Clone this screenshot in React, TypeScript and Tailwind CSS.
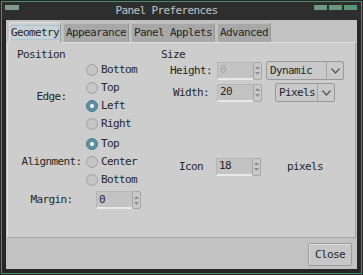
import React from 'react';

const txt = "font-['DejaVu_Sans_Mono','Liberation_Mono',monospace] text-[11px] tracking-[-0.62px] leading-[12px] text-[#262626]";

function Radio({ label, checked }: { label: string; checked?: boolean }) {
  return (
    <div className="h-[18px] flex items-center">
      {checked ? (
        <span className="w-[12px] h-[12px] rounded-full bg-[#5d90a7] border border-[#4a7b92] flex items-center justify-center">
          <span className="w-[4px] h-[4px] rounded-full bg-white" />
        </span>
      ) : (
        <span className="w-[12px] h-[12px] rounded-full bg-[#c6c6c6] border border-[#a2a2a2]" />
      )}
      <span className="ml-[3px]">{label}</span>
    </div>
  );
}

function Spin({ value, disabled }: { value: string; disabled?: boolean }) {
  return (
    <div className="flex h-[18px] w-[45px]">
      <div
        className={`w-[36px] h-full bg-[#c3c3c3] border-t border-l border-[#b6b6b6] border-b-2 border-b-[#e8e8e8] pl-[2px] flex items-center ${
          disabled ? 'text-[#a4a4a4]' : ''
        }`}
      >
        {value}
      </div>
      <div className="w-[9px] h-full border border-[#a6a6a6] rounded-[2px] bg-[#c9c9c9] flex flex-col items-center justify-center gap-[3px]">
        <svg width="5" height="3" viewBox="0 0 5 3">
          <path d="M0 3 L2.5 0 L5 3 Z" fill="#8c8c8c" />
        </svg>
        <svg width="5" height="3" viewBox="0 0 5 3">
          <path d="M0 0 L2.5 3 L5 0 Z" fill="#8c8c8c" />
        </svg>
      </div>
    </div>
  );
}

function Dropdown({ value, width }: { value: string; width: string }) {
  return (
    <div className={`${width} h-[19px] flex border border-[#999] rounded-[2px] bg-[#c9c9c9]`}>
      <div className="flex-1 pl-[3px] flex items-center">{value}</div>
      <div className="w-[17px] border-l border-[#a4a4a4] flex items-center justify-center">
        <svg width="9" height="6" viewBox="0 0 9 6">
          <path d="M0.5 0.5 L4.5 5 L8.5 0.5" stroke="#555" strokeWidth="1.2" fill="none" />
        </svg>
      </div>
    </div>
  );
}

export default function App() {
  const tabs = ['Appearance', 'Panel Applets', 'Advanced'];

  return (
    <div className={`w-[363px] h-[275px] bg-[#262626] p-[1px] ${txt}`}>
      <div className="h-full border border-[#4e8b6c] flex flex-col">
        {/* title bar */}
        <div className="h-[18px] flex items-center bg-[#2e2e2e]">
          <div className="ml-[3px] w-[14px] h-[5px] bg-[#7f9b8d] self-start mt-[3px]" />
          <div className="flex-1 text-center text-[#c4c4c4]">Panel Preferences</div>
          <div className="mr-[4px] flex gap-[2px] self-start mt-[3px]">
            <div className="w-[13px] h-[5px] bg-[#6f9a85]" />
            <div className="w-[13px] h-[5px] bg-[#679981]" />
            <div className="w-[13px] h-[5px] bg-[#5a9676]" />
          </div>
        </div>

        {/* client */}
        <div className="mx-[4px] mb-[4px] flex-1 bg-[#c2c2c2] flex flex-col">
          <div className="h-[20px] mt-[2px] flex items-end gap-[2px] pl-[3px] relative z-10">
            <div className="h-[21px] -mb-[1px] w-[52px] bg-[#cdcdcd] border-t border-l border-[#e2e2e2] border-r border-r-[#9e9e9e] pt-[2px] px-[1px] flex">
              <div className="h-[15px] w-full border border-[#a8c6d6] bg-[#c9d1d5] flex items-center justify-center">
                Geometry
              </div>
            </div>
            {tabs.map((t) => (
              <div
                key={t}
                className="h-[19px] px-[2px] bg-[#a8a8a8] border-t border-l border-[#bdbdbd] border-r border-r-[#969696] flex items-center"
              >
                {t}
              </div>
            ))}
          </div>

          {/* page */}
          <div className="mx-[1px] h-[196px] bg-[#cdcdcd] border border-[#e0e0e0] border-b-[#a2a2a2] border-r-[#a2a2a2] flex pl-[9px] pt-[6px]">
            <div className="w-[144px] flex flex-col">
              <div className="h-[12px]">Position</div>
              <div className="flex">
                <div className="w-[69px] flex items-center justify-center">Edge:</div>
                <div className="flex flex-col">
                  <Radio label="Bottom" />
                  <Radio label="Top" />
                  <Radio label="Left" checked />
                  <Radio label="Right" />
                </div>
              </div>
              <div className="flex mt-[2px]">
                <div className="w-[69px] flex items-center justify-center">Alignment:</div>
                <div className="flex flex-col">
                  <Radio label="Top" checked />
                  <Radio label="Center" />
                  <Radio label="Bottom" />
                </div>
              </div>
              <div className="flex items-center mt-[2px] h-[18px]">
                <div className="w-[69px] text-center">Margin:</div>
                <div className="ml-[10px]">
                  <Spin value="0" />
                </div>
              </div>
            </div>

            <div className="flex flex-col">
              <div className="h-[12px]">Size</div>
              <div className="h-[19px] flex items-center">
                <div className="ml-[5px] w-[50px] text-center">Height:</div>
                <div className="ml-[1px]">
                  <Spin value="0" disabled />
                </div>
                <div className="ml-[4px]">
                  <Dropdown value="Dynamic" width="w-[78px]" />
                </div>
              </div>
              <div className="h-[19px] mt-[3px] flex items-center">
                <div className="ml-[5px] w-[50px] text-center">Width:</div>
                <div className="ml-[1px]">
                  <Spin value="20" />
                </div>
                <div className="ml-[4px] w-[78px] flex justify-center">
                  <Dropdown value="Pixels" width="w-[60px]" />
                </div>
              </div>
              <div className="h-[19px] mt-[55px] flex items-center">
                <div className="ml-[5px] w-[50px] text-center">Icon</div>
                <div>
                  <Spin value="18" />
                </div>
                <div className="ml-[5px] w-[78px] text-center">pixels</div>
              </div>
            </div>
          </div>

          <div className="flex-1 flex items-end justify-end pr-[5px] pb-[3px]">
            <div className="w-[44px] h-[23px] bg-[#c7c7c7] border border-[#9c9c9c] rounded-[2px] shadow-[inset_1px_1px_0_#dedede] flex items-center justify-center">
              Close
            </div>
          </div>
        </div>
      </div>
    </div>
  );
}
